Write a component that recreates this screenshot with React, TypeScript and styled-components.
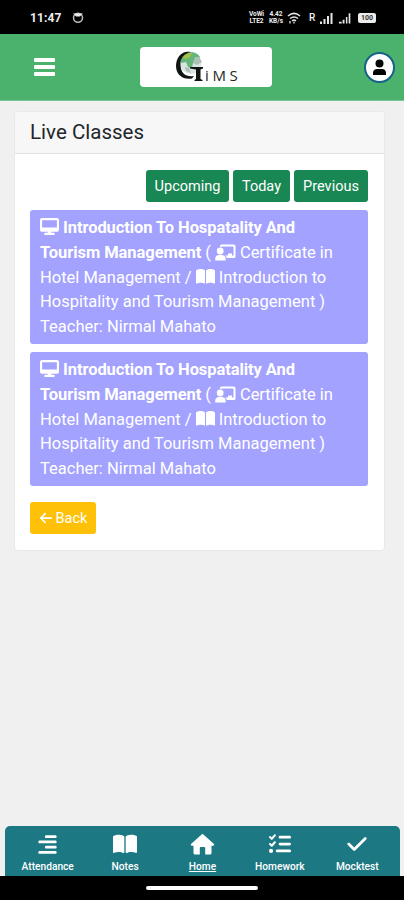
import React from "react";
import styled, { createGlobalStyle, css } from "styled-components";
import {
  FaAlignRight,
  FaArrowLeft,
  FaBookOpen,
  FaCheck,
  FaDesktop,
  FaListCheck,
} from "react-icons/fa6";

const GlobalStyle = createGlobalStyle`
  * { box-sizing: border-box; }
  body {
    margin: 0;
    background: #f0f0f0;
    font-family: Roboto, "Liberation Sans", sans-serif;
  }
  button { font-family: inherit; border: 0; padding: 0; }
`;

const Screen = styled.div`
  width: 404px;
  height: 900px;
  display: flex;
  flex-direction: column;
  overflow: hidden;
  background: #f0f0f0;
`;

const StatusBar = styled.div`
  height: 34px;
  flex: none;
  background: #000;
  color: #eee;
  display: flex;
  align-items: center;
  padding: 1px 28px 0 30px;
`;

const Clock = styled.span`
  font-size: 12px;
  font-weight: 700;
  width: 42px;
  letter-spacing: 0.1px;
`;

const StatusIcons = styled.div`
  margin-left: auto;
  display: flex;
  align-items: center;
`;

const TinyStack = styled.span<{ $width: number }>`
  width: ${(p) => p.$width}px;
  font-size: 6.5px;
  line-height: 6.5px;
  font-weight: 700;
  text-align: center;
  white-space: nowrap;
`;

const Roaming = styled.span`
  font-size: 10px;
  font-weight: 500;
  width: 7px;
  margin: 0 4px 0 8px;
`;

const Header = styled.header`
  height: 67px;
  flex: none;
  background: #4bb26e;
  border-bottom: 1px solid #76c592;
  display: flex;
  align-items: center;
  justify-content: space-between;
  padding: 0 9px 0 34px;
`;

const MenuButton = styled.button`
  width: 21px;
  height: 18px;
  background: none;
  display: flex;
  flex-direction: column;
  justify-content: space-between;
`;

const MenuLine = styled.span`
  width: 21px;
  height: 4px;
  border-radius: 1px;
  background: #fff;
`;

const LogoBox = styled.div`
  width: 132px;
  height: 40px;
  margin-left: 61px;
  border-radius: 4px;
  background: #fff;
  display: flex;
  align-items: center;
  justify-content: center;
`;

const Avatar = styled.button`
  width: 31px;
  height: 31px;
  margin-left: 69px;
  border-radius: 50%;
  border: 2px solid #14628a;
  background: #fff;
  display: flex;
  align-items: center;
  justify-content: center;
`;

const Content = styled.main`
  flex: 1;
  padding: 10px 19px 0 14px;
`;

const Card = styled.section`
  height: 440px;
  background: #fff;
  border: 1px solid #e9e9e9;
  border-radius: 4px;
  overflow: hidden;
`;

const CardTitle = styled.h1`
  margin: 0;
  height: 42px;
  padding: 0 15px;
  background: #f7f7f7;
  border-bottom: 1px solid #e1e1e1;
  color: #222529;
  font-size: 20.5px;
  font-weight: 400;
  line-height: 40px;
  letter-spacing: 0.02px;
`;

const CardBody = styled.div`
  padding: 16px 16px 0 15px;
`;

const FilterRow = styled.div`
  display: flex;
  justify-content: flex-end;
  gap: 4px;
  margin-bottom: 8px;
`;

const Button = styled.button<{ $width: number; $tone?: "success" | "warning" }>`
  width: ${(p) => p.$width}px;
  height: 32px;
  border-radius: 3px;
  color: #fff;
  font-size: 14.5px;
  display: flex;
  align-items: center;
  justify-content: center;
  gap: 3px;
  background: ${(p) => (p.$tone === "warning" ? "#ffc107" : "#198754")};
`;

const ClassItem = styled.article`
  height: 134px;
  margin-bottom: 8px;
  padding: 6px 10px 0;
  border-radius: 3px;
  background: #a3a2ff;
  color: #fff;
  font-size: 16.5px;
  line-height: 24.8px;
  white-space: nowrap;
`;

const Line = styled.div<{ $spacing?: number }>`
  height: 24.8px;
  letter-spacing: ${(p) => p.$spacing ?? 0}px;
  svg {
    vertical-align: -3px;
  }
`;

const Strong = styled.strong`
  font-weight: 700;
`;

const BackRow = styled.div`
  padding-top: 8px;
`;

const BottomNav = styled.nav`
  height: 50px;
  flex: none;
  margin: 0 4px 0 5px;
  padding: 0 4px;
  border-radius: 5px 5px 0 0;
  background: #1c7883;
  display: grid;
  grid-template-columns: repeat(5, 1fr);
`;

const NavItem = styled.a<{ $active?: boolean }>`
  color: #fff;
  display: flex;
  flex-direction: column;
  align-items: center;
  padding-top: 7px;
  font-size: 10.2px;
  font-weight: 500;
  line-height: 12px;
  ${(p) =>
    p.$active &&
    css`
      text-decoration: underline;
    `}
`;

const NavIcon = styled.span`
  height: 22px;
  margin-bottom: 6px;
  display: flex;
  align-items: center;
`;

const GestureBar = styled.div`
  height: 24px;
  flex: none;
  background: #000;
  display: flex;
  justify-content: center;
  padding-top: 10px;
`;

const GesturePill = styled.div`
  width: 112px;
  height: 4px;
  border-radius: 2px;
  background: #fff;
`;

const AlarmGlyph = () => (
  <svg width="12" height="13" viewBox="0 0 12 13" fill="none">
    <circle cx="6" cy="6.8" r="4.5" stroke="#bbb" strokeWidth="1.5" />
    <path d="M2.5 3h7L7.5 5h-3z" stroke="#eee" strokeWidth="1.2" fill="#eee" />
  </svg>
);

const WifiGlyph = () => (
  <svg width="14" height="12" viewBox="0 0 14 12" fill="none" stroke="#e6e6e6" strokeWidth="1.5">
    <path d="M1 4Q7-1.2 13 4M3 6.5q4-3.2 8 0M5 8.8q2-1.5 4 0" />
    <path d="M7 9.5v2M3 9v2.5" strokeWidth="1.3" />
  </svg>
);

const SignalGlyph = () => (
  <svg width="13" height="12" viewBox="0 0 13 12" fill="#e6e6e6">
    <path d="M0 9.5h2V12H0zM3.5 7h2v5h-2zM7 4h2v8H7zM10.5 1h2v11h-2z" />
  </svg>
);

const SecondSignalGlyph = () => (
  <svg width="13" height="12" viewBox="0 0 14 12" fill="#e6e6e6">
    <path d="M1 10h3V12H1zM5 8h2v4H5zM8.5 5h1.6v7H8.5zM11.5 1h1.8v11h-1.8z" />
  </svg>
);

const SignalPair = styled.span`
  display: flex;
  gap: 5px;
`;

const Battery = styled.span`
  width: 18px;
  height: 10px;
  margin-left: 7px;
  border-radius: 2px;
  background: #ececec;
  color: #333;
  font-size: 7px;
  font-weight: 700;
  line-height: 10px;
  text-align: center;
`;

const Logo = () => (
  <svg width="132" height="40" viewBox="0 0 132 40">
    <circle cx="51" cy="16.5" r="10.5" fill="#d9e5e0" />
    <path d="M41 11q4-6 11-6 6 1 8 5l-3 5-4 1-1 5-4-1-2-5-5 1z" fill="#65b779" />
    <path d="M44 8q5-3 8-2l-2 4-4 2-3-1z" fill="#a5bf48" />
    <path d="M55 10l4 0 3 5-5 3-4-2zM45 20l4 1 2 5-5-2z" fill="#aebfb9" />
    <path d="M51 5C41 3 36 11 36 19c0 9 7 14 16 12.5l2-2.5c-8 1-13-2-13.5-11C40 11 44 6.5 51 5z" fill="#101413" />
    <path d="M50 20h13v1.500l-2.500 1V32l2 1v1h-8v-1l1.500-1V22.500l-6-1z" fill="#101413" />
    <text
      x="65"
      y="33.5"
      fontFamily="Open Sans, sans-serif"
      fontSize="15"
      fill="#252a28"
      letterSpacing="3.6"
    >
      iMS
    </text>
  </svg>
);

const Person = () => (
  <svg width="15" height="17" viewBox="0 0 15 17" fill="#050505">
    <circle cx="7.5" cy="4.4" r="4" />
    <path d="M1 16v-2.2C1 11.2 3 10 5 10h5c2.300 0 4 1.400 4 3.800V16z" />
  </svg>
);

const HomeGlyph = () => (
  <svg width="25" height="22" viewBox="0 0 25 22" fill="#fff">
    <path d="M12.500.8 24 11q.8 1.500-.8 1.800H21.500V20q0 1.500-1.500 1.500h-4.800V15q0-1-1-1h-3.400q-1 0-1 1v6.500H5Q3.500 21.500 3.500 20v-7.200H1.800Q.2 12.500 1 11z" />
  </svg>
);

const TeacherGlyph = () => (
  <svg width="21" height="17" viewBox="0 0 21 17" fill="#fff">
    <path d="M5 3V2Q5 .5 6.500.5h12Q20.500.5 20.500 2v10.500q0 1.500-1.500 1.500h-7q-.5-1.500-2-2.500h3V9.500h4v2h1.500v-9H8Q6.500 2.500 5 3z" />
    <circle cx="5.200" cy="7" r="3.400" />
    <path d="M.2 16.500v-1.500q0-4 4-4h2q4.500 0 4.500 4v1.500z" />
  </svg>
);

const LiveClass = () => (
  <ClassItem>
    <Line $spacing={-0.08}>
      <FaDesktop size={19} /> <Strong>Introduction To Hospatality And</Strong>
    </Line>
    <Line $spacing={-0.06}>
      <Strong>Tourism Management</Strong> ( <TeacherGlyph /> Certificate in
    </Line>
    <Line>
      Hotel Management / <FaBookOpen size={19} /> Introduction to
    </Line>
    <Line>Hospitality and Tourism Management )</Line>
    <Line>Teacher: Nirmal Mahato</Line>
  </ClassItem>
);

const navItems = [
  { label: "Attendance", icon: <FaAlignRight size={21} /> },
  { label: "Notes", icon: <FaBookOpen size={24} /> },
  { label: "Home", icon: <HomeGlyph />, active: true },
  { label: "Homework", icon: <FaListCheck size={22} /> },
  { label: "Mocktest", icon: <FaCheck size={22} /> },
];

export default function App() {
  return (
    <>
      <GlobalStyle />
      <Screen>
        <StatusBar>
          <Clock>11:47</Clock>
          <AlarmGlyph />
          <StatusIcons>
            <TinyStack $width={17}>VoWi<br />LTE2</TinyStack>
            <TinyStack $width={22}>4.42<br />KB/s</TinyStack>
            <WifiGlyph />
            <Roaming>R</Roaming>
            <SignalPair>
              <SignalGlyph />
              <SecondSignalGlyph />
            </SignalPair>
            <Battery>100</Battery>
          </StatusIcons>
        </StatusBar>
        <Header>
          <MenuButton aria-label="Menu">
            <MenuLine />
            <MenuLine />
            <MenuLine />
          </MenuButton>
          <LogoBox>
            <Logo />
          </LogoBox>
          <Avatar aria-label="Profile">
            <Person />
          </Avatar>
        </Header>
        <Content>
          <Card>
            <CardTitle>Live Classes</CardTitle>
            <CardBody>
              <FilterRow>
                <Button $width={83}>Upcoming</Button>
                <Button $width={57}>Today</Button>
                <Button $width={74}>Previous</Button>
              </FilterRow>
              <LiveClass />
              <LiveClass />
              <BackRow>
                <Button $width={66} $tone="warning">
                  <FaArrowLeft size={14} />
                  Back
                </Button>
              </BackRow>
            </CardBody>
          </Card>
        </Content>
        <BottomNav>
          {navItems.map((item) => (
            <NavItem key={item.label} $active={item.active}>
              <NavIcon>{item.icon}</NavIcon>
              {item.label}
            </NavItem>
          ))}
        </BottomNav>
        <GestureBar>
          <GesturePill />
        </GestureBar>
      </Screen>
    </>
  );
}
